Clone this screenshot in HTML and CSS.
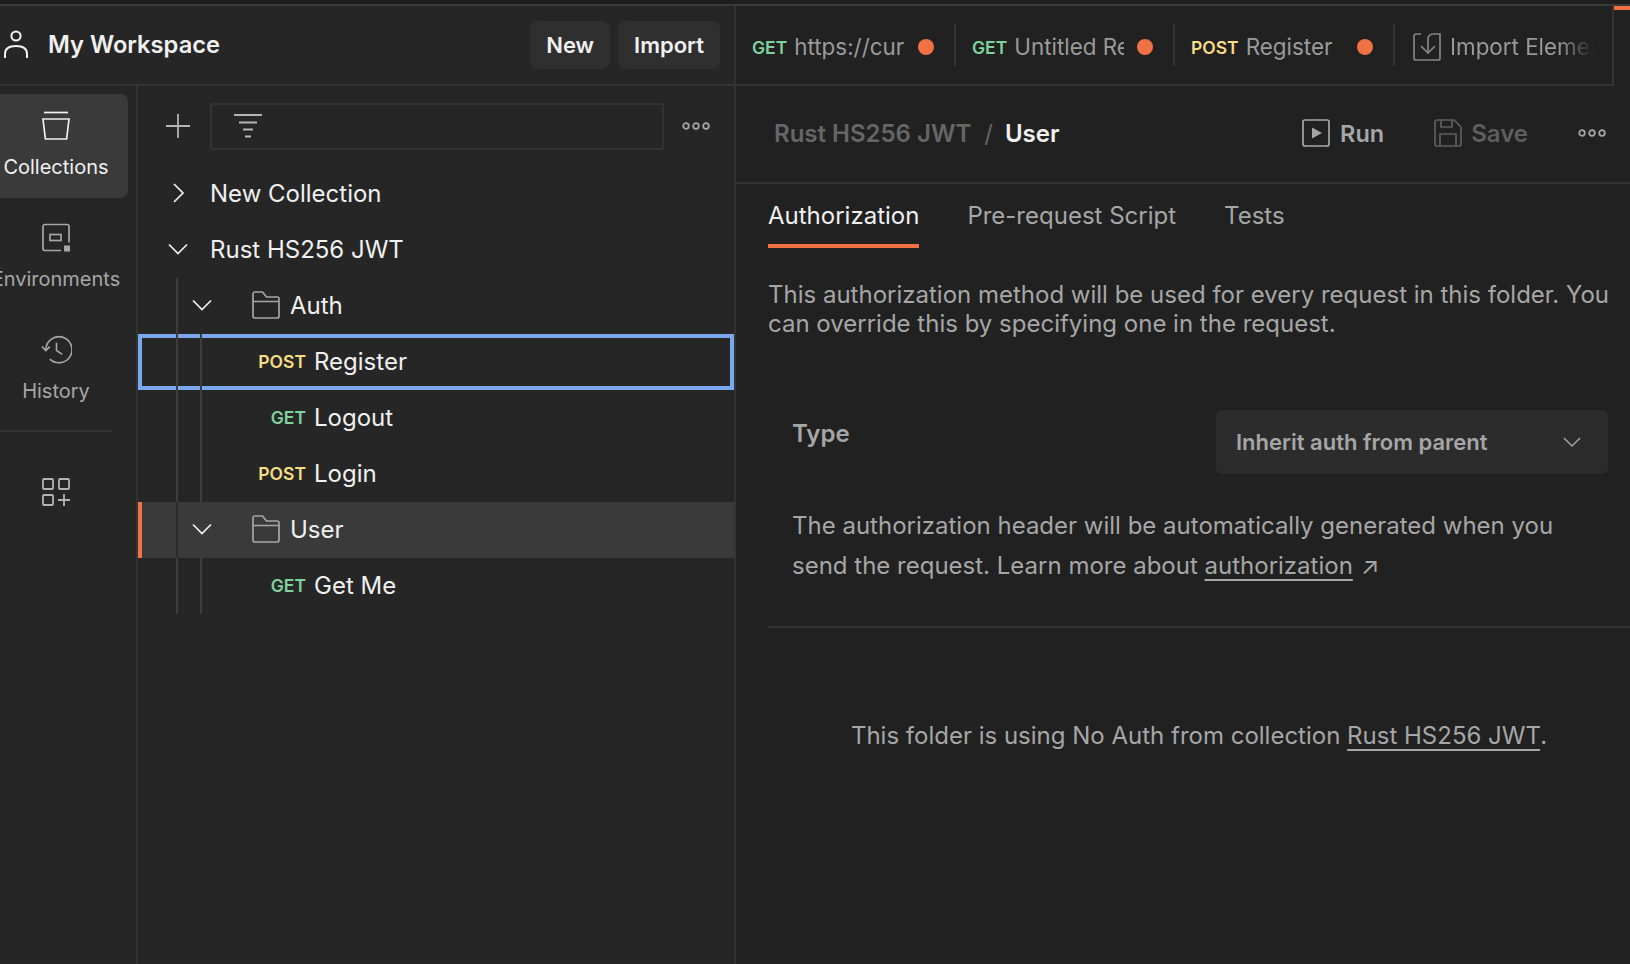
FILE: index.html
```html
<!DOCTYPE html>
<html lang="en">
<head>
<meta charset="utf-8">
<title>My Workspace</title>
<link rel="stylesheet" href="styles.css">
</head>
<body>
<div class="topline"></div>
<div class="app">
  <aside class="left">
    <header class="ws">
      <svg class="ws-icon" viewBox="0 0 24 28" fill="none" stroke="#f0f0f0" stroke-width="2"><circle cx="12" cy="6" r="4.6"/><path d="M1 28v-4c0-5 4-8 11-8s11 3 11 8v4"/></svg>
      <span class="ws-title">My Workspace</span>
      <button class="btn">New</button>
      <button class="btn">Import</button>
    </header>
    <div class="left-body">
      <nav class="rail">
        <div class="rail-item active">
          <svg class="rail-icon" viewBox="0 0 28 28" fill="none" stroke="#f0f0f0" stroke-width="1.7"><path d="M2 1h24"/><path d="M1 7.500h26l-2.400 20H3.400z"/></svg>
          <span>Collections</span>
        </div>
        <div class="rail-item">
          <svg class="rail-icon" viewBox="0 0 28 28" fill="none" stroke="#a6a6a6" stroke-width="1.7"><path d="M19 27H3a2 2 0 0 1-2-2V3a2 2 0 0 1 2-2h22a2 2 0 0 1 2 2v16"/><rect x="8" y="11" width="11" height="6"/><rect x="22" y="22" width="6" height="6" fill="#a6a6a6" stroke="none"/></svg>
          <span>Environments</span>
        </div>
        <div class="rail-item">
          <svg class="rail-icon history" viewBox="0 0 32 30" fill="none" stroke="#a6a6a6" stroke-width="1.700"><path d="M5 15a13.500 13.500 0 1 1 4.200 10"/><path d="M1 12l4 4 4-4"/><path d="M16 8v8l6 4"/></svg>
          <span>History</span>
        </div>
        <div class="rail-rule"></div>
        <svg class="rail-icon grid-icon" viewBox="0 0 28 28" fill="none" stroke="#b4b4b4" stroke-width="1.8"><rect x="1" y="1" width="10" height="10" rx="1"/><rect x="17" y="1" width="10" height="10" rx="1"/><rect x="1" y="17" width="10" height="10" rx="1"/><path d="M16 22h12M22 16v12"/></svg>
      </nav>
      <section class="tree-pane">
        <div class="tools">
          <svg class="plus" viewBox="0 0 24 24" stroke="#b4b4b4" stroke-width="1.8"><path d="M0 12h24M12 0v24"/></svg>
          <div class="search">
            <svg class="filter" viewBox="0 0 28 24" stroke="#b4b4b4" stroke-width="1.8"><path d="M0 1h28M5 8.500h18M9 15.500h10M11 22.500h6"/></svg>
          </div>
          <svg class="dots" viewBox="0 0 28 8" fill="none" stroke="#a6a6a6" stroke-width="1.8"><circle cx="4" cy="4" r="2.800"/><circle cx="14" cy="4" r="2.800"/><circle cx="24" cy="4" r="2.800"/></svg>
        </div>
        <div class="tree">
          <div class="row lv0">
            <svg class="chev" viewBox="0 0 20 20" fill="none" stroke="#f0f0f0" stroke-width="1.700"><path d="M6 1l9 9-9 9"/></svg>
            <span class="name">New Collection</span>
          </div>
          <div class="row lv0">
            <svg class="chev" viewBox="0 0 20 20" fill="none" stroke="#f0f0f0" stroke-width="1.700"><path d="M1 5.500l9 9 9-9"/></svg>
            <span class="name">Rust HS256 JWT</span>
          </div>
          <div class="row lv1 g1">
            <svg class="chev" viewBox="0 0 20 20" fill="none" stroke="#f0f0f0" stroke-width="1.700"><path d="M1 5.500l9 9 9-9"/></svg>
            <svg class="folder" viewBox="0 0 28 28" fill="none" stroke="#a6a6a6" stroke-width="1.700"><path d="M1 25V3a2 2 0 0 1 2-2h7.500l4 5H25a2 2 0 0 1 2 2v17a2 2 0 0 1-2 2H3a2 2 0 0 1-2-2zM1 10.500h26"/></svg>
            <span class="name">Auth</span>
          </div>
          <div class="row req focus g1 g2"><span class="method post">POST</span><span class="name">Register</span></div>
          <div class="row req g1 g2"><span class="method get">GET</span><span class="name">Logout</span></div>
          <div class="row req g1 g2"><span class="method post">POST</span><span class="name">Login</span></div>
          <div class="row lv1 selected g1">
            <svg class="chev" viewBox="0 0 20 20" fill="none" stroke="#f0f0f0" stroke-width="1.700"><path d="M1 5.500l9 9 9-9"/></svg>
            <svg class="folder" viewBox="0 0 28 28" fill="none" stroke="#a6a6a6" stroke-width="1.700"><path d="M1 25V3a2 2 0 0 1 2-2h7.500l4 5H25a2 2 0 0 1 2 2v17a2 2 0 0 1-2 2H3a2 2 0 0 1-2-2zM1 10.500h26"/></svg>
            <span class="name">User</span>
          </div>
          <div class="row req g1 g2"><span class="method get">GET</span><span class="name">Get Me</span></div>
        </div>
      </section>
    </div>
  </aside>
  <main class="right">
    <div class="tabs-bar">
      <div class="tabs">
        <div class="tab"><span class="method get">GET</span><span class="tab-name">https://curl.se</span><i class="dot"></i></div>
        <div class="tab"><span class="method get">GET</span><span class="tab-name">Untitled Request</span><i class="dot"></i></div>
        <div class="tab"><span class="method post">POST</span><span class="tab-name">Register</span><i class="dot"></i></div>
        <div class="tab last">
          <svg class="import" viewBox="0 0 28 28" fill="none" stroke="#858585" stroke-width="1.700"><path d="M8 1H3a2 2 0 0 0-2 2v22a2 2 0 0 0 2 2h22a2 2 0 0 0 2-2V1h-7a5 5 0 0 0-5 5v13"/><path d="M8 13l7 7 7-7"/></svg>
          <span class="tab-name fade">Import Elements</span>
        </div>
      </div>
      <div class="tab-accent"></div>
    </div>
    <div class="crumbs">
      <span class="crumb-dim">Rust HS256 JWT</span>
      <span class="crumb-sep">/</span>
      <span class="crumb-cur">User</span>
      <span class="crumb-actions">
        <span class="action run">
          <svg viewBox="0 0 28 28" fill="none" stroke="#a6a6a6" stroke-width="1.700"><rect x="1" y="1" width="26" height="26" rx="2"/><path d="M10 8.500l10 5.500-10 5.500z" fill="#a6a6a6" stroke="none"/></svg>
          Run
        </span>
        <span class="action save">
          <svg viewBox="0 0 28 28" fill="none" stroke="#5e5e5e" stroke-width="1.700"><path d="M1 3a2 2 0 0 1 2-2h17l7 7v17a2 2 0 0 1-2 2H3a2 2 0 0 1-2-2z"/><path d="M7 1v7h11V1M6 27V15h16v12"/></svg>
          Save
        </span>
        <svg class="dots" viewBox="0 0 28 8" fill="none" stroke="#a6a6a6" stroke-width="1.800"><circle cx="4" cy="4" r="2.800"/><circle cx="14" cy="4" r="2.800"/><circle cx="24" cy="4" r="2.800"/></svg>
      </span>
    </div>
    <div class="subtabs">
      <span class="subtab on">Authorization</span>
      <span class="subtab">Pre-request Script</span>
      <span class="subtab">Tests</span>
    </div>
    <div class="content">
      <p class="desc">This authorization method will be used for every request in this folder. You can override this by specifying one in the request.</p>
      <div class="type-block">
        <div class="type-row">
          <span class="type-label">Type</span>
          <div class="select">
            <span>Inherit auth from parent</span>
            <svg viewBox="0 0 20 20" fill="none" stroke="#a6a6a6" stroke-width="1.600"><path d="M1 5.500l9 9 9-9"/></svg>
          </div>
        </div>
        <p class="help">The authorization header will be automatically generated when you send the request. Learn more about <a class="link">authorization</a><span class="arrow">↗</span></p>
      </div>
      <div class="rule"></div>
      <p class="notice">This folder is using No Auth from collection <a class="link">Rust HS256 JWT</a>.</p>
    </div>
  </main>
</div>
</body>
</html>
```
FILE: styles.css
```css
* { box-sizing: border-box; }
html, body { margin: 0; height: 100%; overflow: hidden; }
body {
  background: #212121;
  color: #a6a6a6;
  font-family: Inter, "Liberation Sans", sans-serif;
  font-size: 24px;
}
p { margin: 0; }
svg { display: block; flex: none; }

.topline { height: 6px; background: #1e1e1e; border-bottom: 2px solid #3a3a3a; }
.app { display: flex; height: 958px; }

/* left pane */
.left {
  width: 736px;
  flex: none;
  background: #262626;
  border-right: 2px solid #333;
  display: flex;
  flex-direction: column;
}
.ws {
  height: 80px;
  flex: none;
  display: flex;
  align-items: center;
  padding: 0 14px 2px 4px;
  border-bottom: 2px solid #333;
}
.ws-icon { width: 24px; height: 28px; margin-right: 20px; }
.ws-title { color: #f0f0f0; font-weight: 600; font-size: 23.700px; margin-right: auto; }
.btn {
  height: 48px;
  padding: 0 16px;
  margin: 2px 0 0 8px;
  border: 0;
  border-radius: 8px;
  background: #2f2f2f;
  color: #f0f0f0;
  font: 600 22px Inter, "Liberation Sans", sans-serif;
}
.left-body { flex: 1; display: flex; min-height: 0; }

.rail {
  width: 138px;
  flex: none;
  border-right: 2px solid #333;
  padding-top: 8px;
  overflow: hidden;
}
.rail-item {
  width: 144px;
  height: 104px;
  margin: 0 0 8px -16px;
  border-radius: 8px;
  display: flex;
  flex-direction: column;
  align-items: center;
  padding-top: 17px;
  font-size: 20px;
  color: #a6a6a6;
  white-space: nowrap;
}
.rail-item span { margin-top: 15px; line-height: 24px; }
.rail-item.active { background: #3a3a3a; color: #f0f0f0; }
.rail-icon { width: 28px; height: 29px; }
.rail-icon.history { width: 31px; }
.rail-rule { height: 2px; width: 112px; margin-top: 8px; background: #333; }
.grid-icon { margin: 46px 0 0 42px; height: 28px; }

.tree-pane { flex: 1; min-width: 0; }
.tools {
  height: 80px;
  display: flex;
  align-items: center;
  padding: 0 24px 0 28px;
}
.plus { width: 24px; height: 24px; }
.search {
  width: 454px;
  height: 47px;
  margin: 0 18px 0 20px;
  border: 2px solid #333;
  border-radius: 3px;
  display: flex;
  align-items: center;
  padding-left: 22px;
}
.filter { width: 28px; height: 24px; }
.dots { width: 28px; height: 8px; }

.row {
  position: relative;
  height: 56px;
  display: flex;
  align-items: center;
  padding-bottom: 2px;
  color: #f0f0f0;
}
.name { white-space: nowrap; }
.lv0 { padding-left: 30px; }
.lv0 .name { margin-left: 22px; }
.lv1 { padding-left: 54px; }
.lv1 .folder { margin-left: 40px; }
.lv1 .name { margin-left: 10px; }
.chev { width: 20px; height: 20px; }
.folder { width: 28px; height: 28px; }
.req { padding-left: 100px; }
.req .method { width: 68px; text-align: right; margin-right: 8px; }
.g1::before, .g2::after {
  content: "";
  position: absolute;
  top: 0;
  bottom: 0;
  width: 2px;
  background: #3d3d3d;
}
.g1::before { left: 38px; }
.g2::after { left: 62px; }
.focus { box-shadow: inset 0 0 0 4px #79a8ee; }
.selected { background: #3a3a3a; box-shadow: inset 4px 0 0 #ef7144; }
.selected::before { background: #2c2c2c; }

.method { font-size: 17.500px; font-weight: 600; white-space: nowrap; }
.post { color: #f7dd83; }
.get { color: #7fd19d; }

/* right pane */
.right { flex: 1; min-width: 0; display: flex; flex-direction: column; }
.tabs-bar { display: flex; height: 80px; flex: none; }
.tabs {
  width: 878px;
  flex: none;
  display: grid;
  grid-template-columns: 220px 219px 220px 1fr;
  align-items: center;
  border-right: 2px solid #333;
  border-bottom: 2px solid #333;
}
.tab {
  height: 42px;
  display: flex;
  align-items: center;
  padding: 4px 0 0 16px;
  border-right: 2px solid #333;
  min-width: 0;
}
.tab.last { border-right: 0; padding-left: 18px; }
.tab .method { margin-right: 7px; }
.tab-name {
  width: 110px;
  overflow: hidden;
  white-space: nowrap;
  color: #9a9a9a;
  font-size: 22.400px;
  margin-top: -2px;
}
.tab-name.fade {
  width: 144px;
  margin-left: 9px;
  -webkit-mask-image: linear-gradient(90deg, #000 75%, transparent);
  mask-image: linear-gradient(90deg, #000 75%, transparent);
}
.dot { width: 16px; height: 16px; border-radius: 50%; background: #ef7144; margin-left: auto; margin-right: 20px; flex: none; }
.import { width: 28px; height: 28px; }
.tab-accent { width: 16px; height: 4px; background: #ef7144; flex: none; }

.crumbs {
  height: 98px;
  flex: none;
  display: flex;
  align-items: center;
  padding: 0 24px 2px 38px;
  border-bottom: 2px solid #333;
  font-weight: 600;
}
.crumb-dim { color: #666; }
.crumb-sep { color: #666; margin: 0 12px 0 13px; font-weight: 400; }
.crumb-cur { color: #f0f0f0; }
.crumb-actions { margin-left: auto; display: flex; align-items: center; }
.action { display: flex; align-items: center; gap: 10px; }
.action svg { width: 28px; height: 28px; }
.run { color: #a6a6a6; margin-right: 50px; font-size: 23.500px; }
.save { color: #5e5e5e; margin-right: 50px; gap: 9px; }

.subtabs {
  height: 64px;
  flex: none;
  display: flex;
  gap: 48px;
  padding-left: 32px;
}
.subtab {
  height: 64px;
  padding-top: 15px;
  line-height: 34px;
  color: #a6a6a6;
  white-space: nowrap;
}
.subtab.on { color: #f0f0f0; border-bottom: 4px solid #ef7144; }

.content { flex: 1; padding: 32px 0 0 32px; }
.desc { line-height: 29px; width: 860px; }
.type-block { padding: 72px 22px 0 24px; }
.type-row { display: flex; justify-content: space-between; align-items: flex-start; }
.type-label { font-weight: 600; line-height: 48px; }
.select {
  width: 392px;
  height: 64px;
  background: #2c2c2c;
  border-radius: 6px;
  display: flex;
  align-items: center;
  justify-content: space-between;
  padding: 0 27px 0 20px;
  font-size: 22px;
  font-weight: 600;
}
.select svg { width: 18px; height: 18px; }
.help { line-height: 40px; margin-top: 32px; width: 800px; }
.link { text-decoration: underline; text-underline-offset: 5px; }
.arrow { font-size: 24px; margin-left: 8px; }
.rule { height: 2px; background: #333; margin-top: 40px; }
.notice { text-align: center; margin-top: 93px; }
```
